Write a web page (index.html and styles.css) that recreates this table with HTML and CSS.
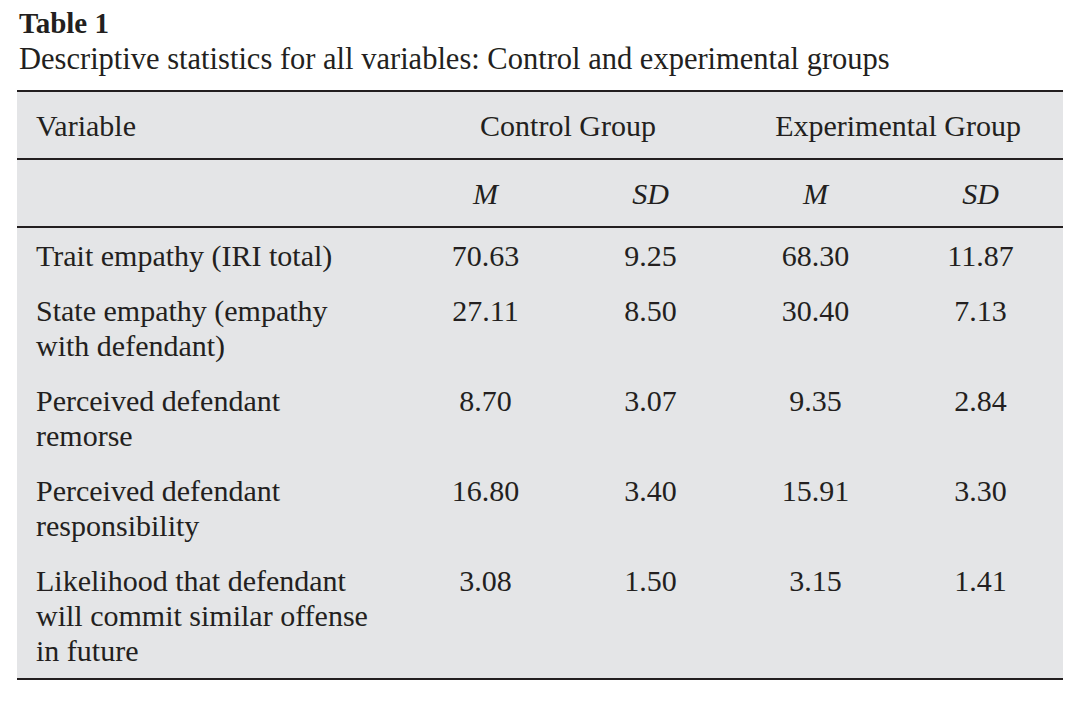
FILE: index.html
```html
<!DOCTYPE html>
<html lang="en">
<head>
<meta charset="utf-8">
<title>Table 1</title>
<link rel="stylesheet" href="styles.css">
</head>
<body>
<div class="page">
  <h1 class="title">Table 1</h1>
  <p class="caption">Descriptive statistics for all variables: Control and experimental groups</p>
  <table class="stats">
    <colgroup>
      <col class="c-var">
      <col class="c-num">
      <col class="c-num">
      <col class="c-num">
      <col class="c-num">
    </colgroup>
    <thead>
      <tr>
        <th class="var">Variable</th>
        <th colspan="2">Control Group</th>
        <th colspan="2">Experimental Group</th>
      </tr>
      <tr>
        <th class="var"></th>
        <th><i>M</i></th>
        <th><i>SD</i></th>
        <th><i>M</i></th>
        <th><i>SD</i></th>
      </tr>
    </thead>
    <tbody>
      <tr>
        <td class="var">Trait empathy (IRI total)</td>
        <td>70.63</td><td>9.25</td><td>68.30</td><td>11.87</td>
      </tr>
      <tr>
        <td class="var">State empathy (empathy<br>with defendant)</td>
        <td>27.11</td><td>8.50</td><td>30.40</td><td>7.13</td>
      </tr>
      <tr>
        <td class="var">Perceived defendant<br>remorse</td>
        <td>8.70</td><td>3.07</td><td>9.35</td><td>2.84</td>
      </tr>
      <tr>
        <td class="var">Perceived defendant<br>responsibility</td>
        <td>16.80</td><td>3.40</td><td>15.91</td><td>3.30</td>
      </tr>
      <tr>
        <td class="var">Likelihood that defendant<br>will commit similar offense<br>in future</td>
        <td>3.08</td><td>1.50</td><td>3.15</td><td>1.41</td>
      </tr>
    </tbody>
  </table>
</div>
</body>
</html>
```
FILE: styles.css
```css
html, body {
  margin: 0;
  padding: 0;
  background: #ffffff;
}

body {
  color: #231f20;
  font-family: "Liberation Serif", "Times New Roman", serif;
}

.page {
  padding-top: 5px;
}

.title {
  margin: 0 0 0 19px;
  font-size: 29px;
  line-height: 36px;
  font-weight: bold;
}

.caption {
  margin: 0 0 13px 19px;
  font-size: 30.5px;
  line-height: 36px;
}

.stats {
  margin-left: 17px;
  width: 1046px;
  table-layout: fixed;
  border-collapse: separate;
  border-spacing: 0;
  background: #e4e5e7;
  font-size: 30px;
  line-height: 35px;
  border-top: 2px solid #231f20;
  border-bottom: 2px solid #231f20;
}

.c-var {
  width: 386px;
}

.c-num {
  width: 165px;
}

.stats th {
  font-weight: normal;
  text-align: center;
  padding: 16px 0 15px;
  border-bottom: 2px solid #231f20;
}

.stats td {
  padding: 10px 0;
  vertical-align: top;
  text-align: center;
}

.stats .var {
  text-align: left;
  padding-left: 19px;
}
```
